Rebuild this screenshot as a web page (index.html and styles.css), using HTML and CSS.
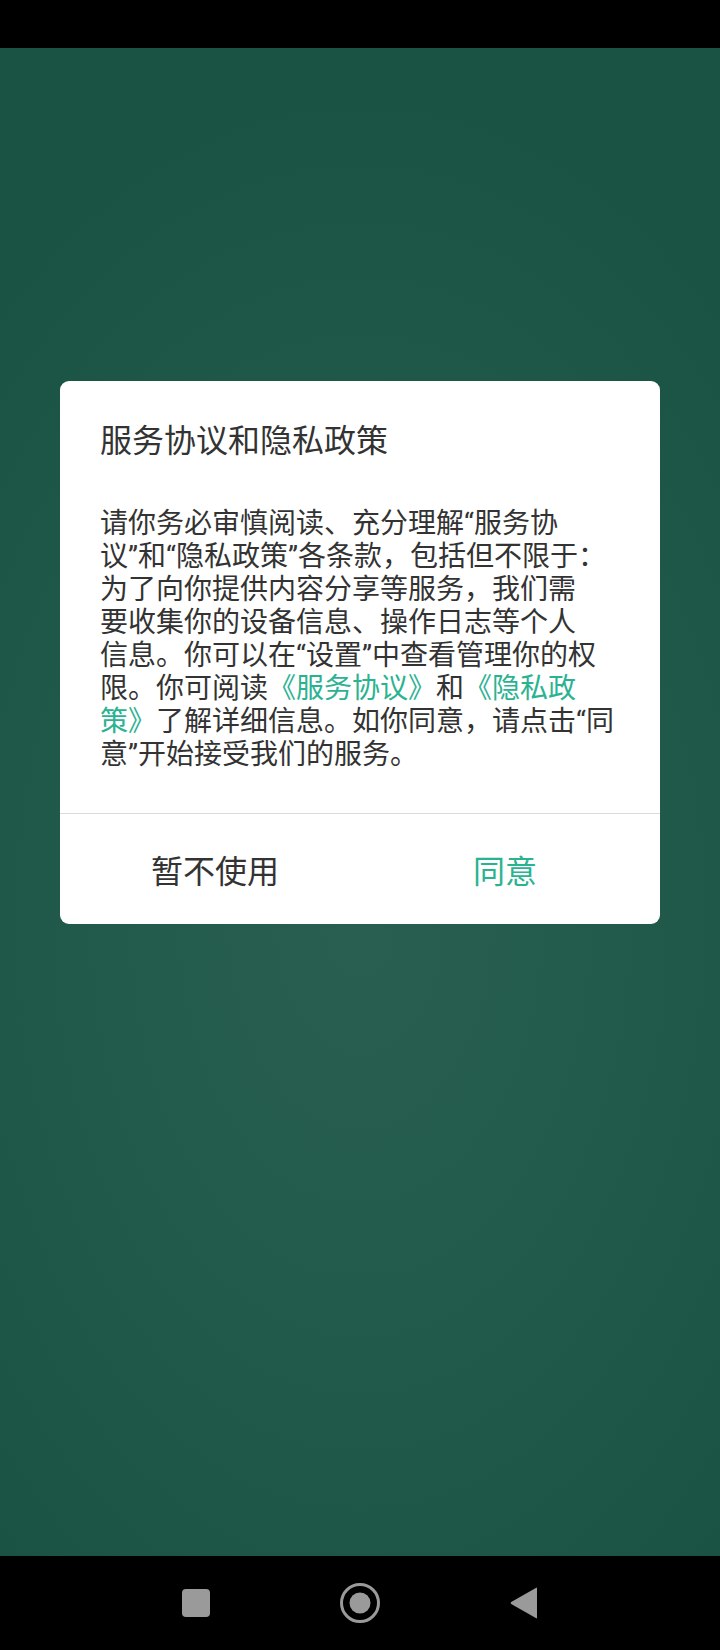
FILE: index.html
```html
<!DOCTYPE html>
<html lang="zh-CN">
<head>
<meta charset="utf-8">
<title>服务协议和隐私政策</title>
<link rel="stylesheet" href="styles.css">
</head>
<body>
<div class="screen">
  <div class="status-bar"></div>
  <main class="content">
    <section class="dialog">
      <h1 class="dialog-title">服务协议和隐私政策</h1>
      <p class="dialog-body">请你务必审慎阅读、充分理解“服务协<br>议”和“隐私政策”各条款，包括但不限于：<br>为了向你提供内容分享等服务，我们需<br>要收集你的设备信息、操作日志等个人<br>信息。你可以在“设置”中查看管理你的权<br>限。你可阅读<a class="link">《服务协议》</a>和<a class="link">《隐私政<br>策》</a>了解详细信息。如你同意，请点击“同<br>意”开始接受我们的服务。</p>
      <div class="dialog-actions">
        <button class="action action-cancel">暂不使用</button>
        <button class="action action-ok">同意</button>
      </div>
    </section>
  </main>
  <nav class="nav-bar">
    <svg class="nav-icon" width="28" height="28" viewBox="0 0 28 28"><rect x="0" y="0" width="28" height="28" rx="4" fill="#9a9a9a"/></svg>
    <svg class="nav-icon" width="40" height="40" viewBox="0 0 40 40"><circle cx="20" cy="20" r="18.5" fill="none" stroke="#9a9a9a" stroke-width="3"/><circle cx="20" cy="20" r="10.5" fill="#9a9a9a"/></svg>
    <svg class="nav-icon" width="28" height="32" viewBox="0 0 28 32"><path d="M27 1.5 L27 30.5 Q27 32 25.8 31 L1.2 17 Q0 16 1.2 15 L25.8 1 Q27 0 27 1.5 Z" fill="#9a9a9a"/></svg>
  </nav>
</div>
</body>
</html>
```
FILE: styles.css
```css
html, body {
  margin: 0;
  padding: 0;
  background: #000;
}
.screen {
  width: 720px;
  height: 1650px;
  display: flex;
  flex-direction: column;
  font-family: "Roboto", "Noto Sans CJK SC", sans-serif;
}
.status-bar {
  height: 48px;
  background: #000;
  flex: none;
}
.content {
  flex: 1;
  background: radial-gradient(ellipse 75% 55% at 50% 58%, #285f51 0%, #225a4b 45%, #1a5344 100%);
  padding-top: 333px;
  box-sizing: border-box;
}
.dialog {
  margin: 0 60px;
  background: #fff;
  border-radius: 9px;
  overflow: hidden;
}
.dialog-title {
  margin: 0;
  padding: 44px 40px 0;
  font-size: 32px;
  line-height: 32px;
  font-weight: normal;
  color: #333;
}
.dialog-body {
  margin: 0;
  padding: 50px 40px 42px;
  font-size: 28px;
  line-height: 33px;
  color: #333;
  white-space: nowrap;
}
.link {
  color: #2bb391;
}
.dialog-actions {
  display: grid;
  grid-template-columns: 1fr 1fr;
  border-top: 1px solid #dcdcdc;
  height: 110px;
}
.action {
  border: none;
  background: none;
  font-family: "Roboto", "Noto Sans CJK SC", sans-serif;
  font-size: 32px;
  padding: 0;
  margin: 0;
}
.action-cancel {
  color: #333;
  padding-left: 10px;
}
.action-ok {
  color: #2bb391;
  padding-right: 10px;
}
.nav-bar {
  height: 94px;
  flex: none;
  background: #000;
  display: flex;
  align-items: center;
  justify-content: center;
  gap: 130px;
}
.nav-icon {
  display: block;
}
```
